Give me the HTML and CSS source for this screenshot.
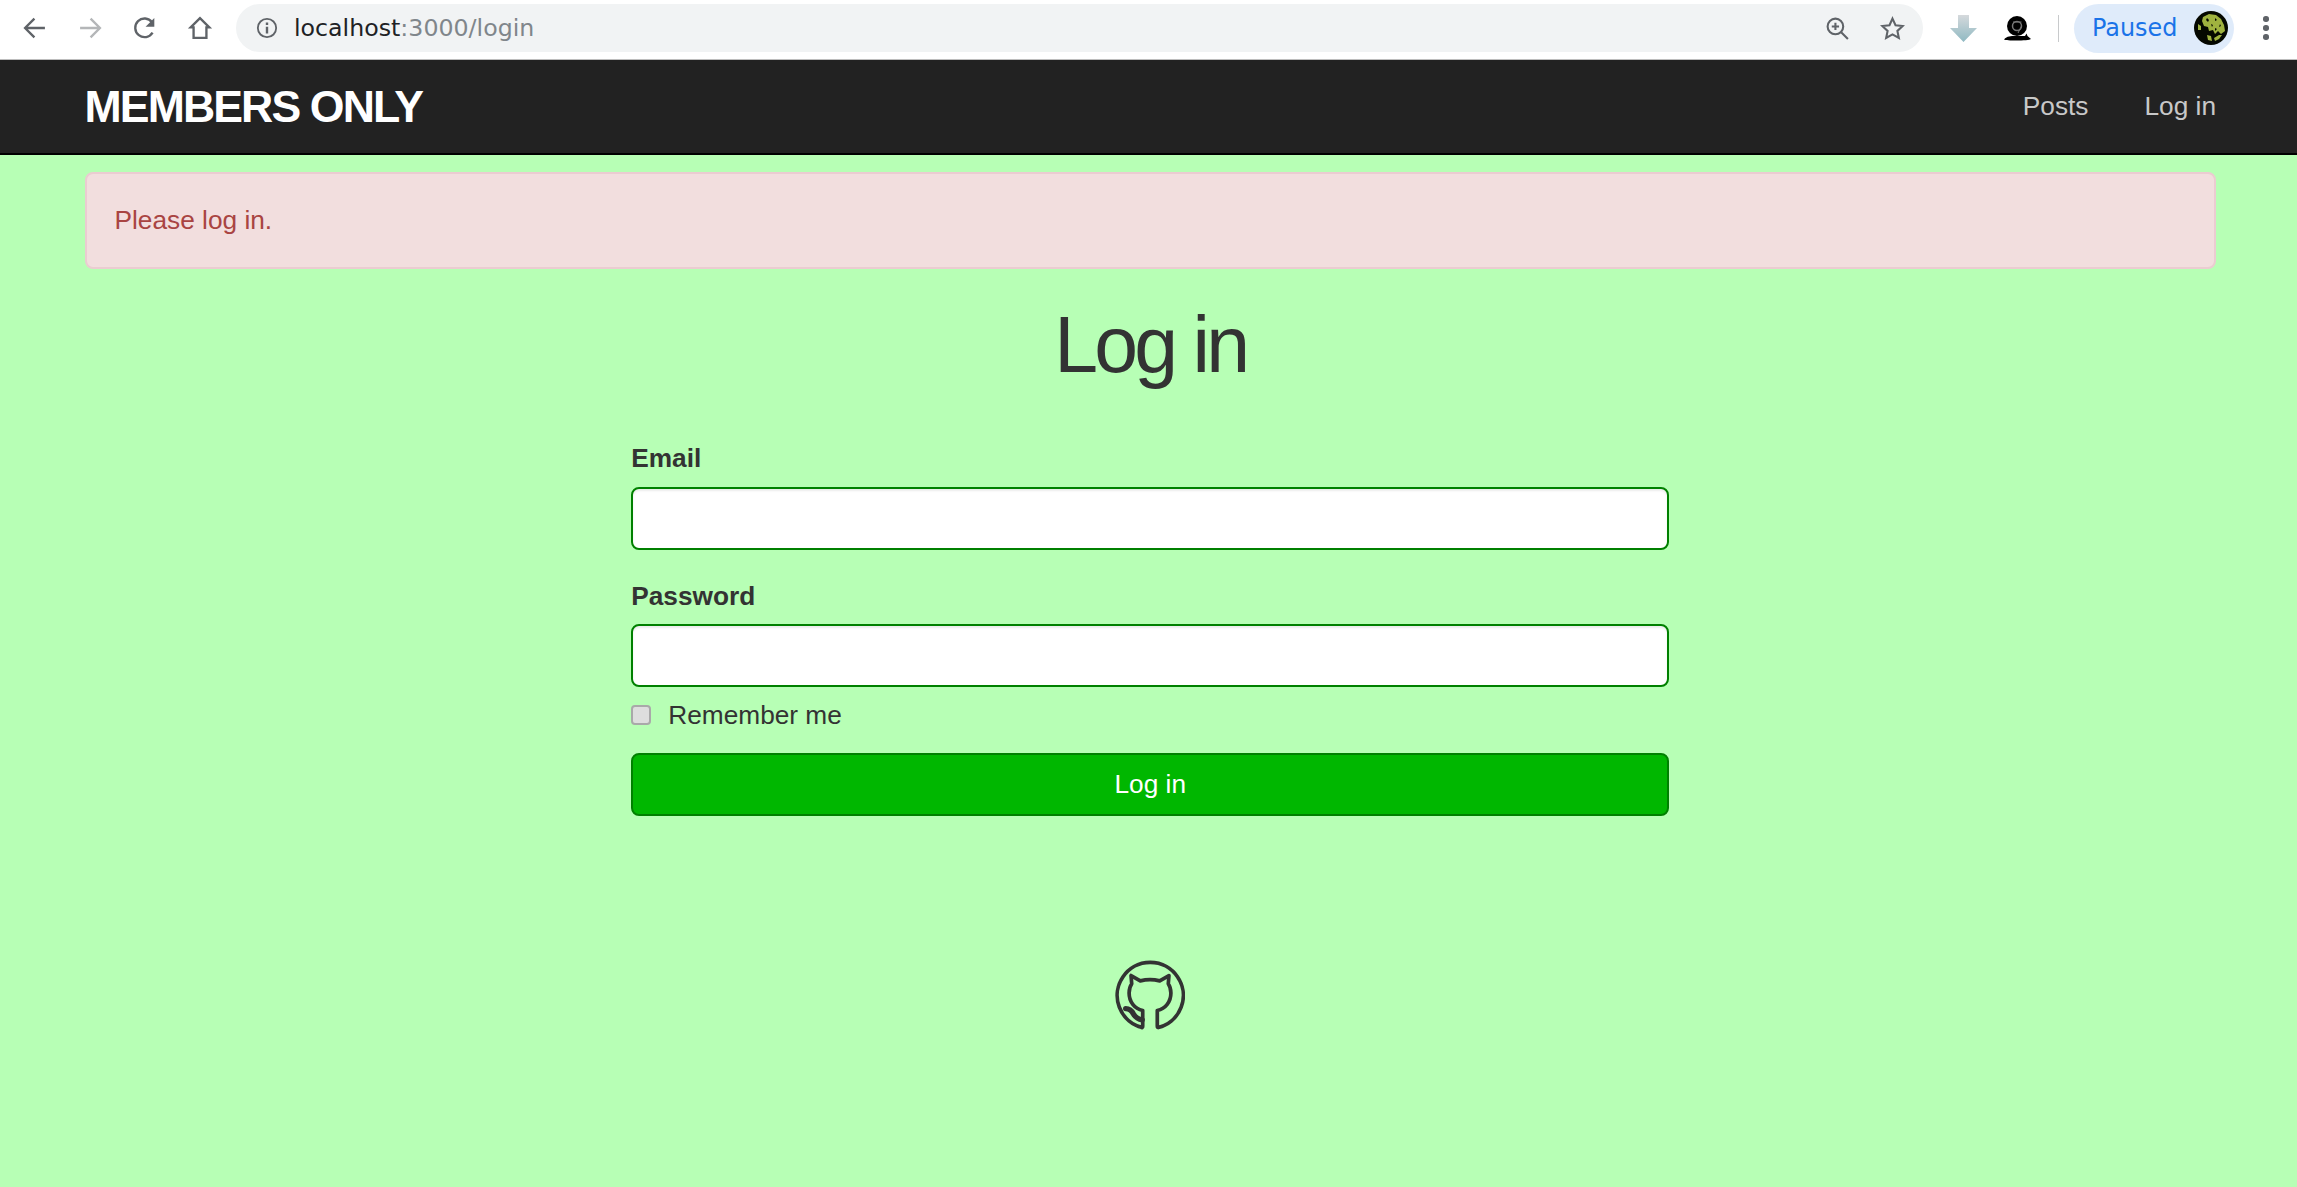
FILE: index.html
```html
<!DOCTYPE html>
<html lang="en">
<head>
<meta charset="utf-8">
<title>Members Only</title>
<link rel="stylesheet" href="styles.css">
</head>
<body>
<div class="toolbar">
  <div class="nav-icons">
    <svg class="tb-icon" viewBox="0 0 24 24"><path class="st" d="M20.500 12H4M11.500 4L3.500 12l8 8"/></svg>
    <svg class="tb-icon faded" viewBox="0 0 24 24"><path class="st" d="M3.500 12H20M12.500 4l8 8-8 8"/></svg>
    <svg class="tb-icon" viewBox="0 0 24 24"><path class="st" d="M18.500 16A8 8 0 1 1 18 7"/><path class="fl" d="M20 3.500v7.500h-7.500z"/></svg>
    <svg class="tb-icon" viewBox="0 0 24 24"><path class="st" d="M12 3.500L4 11.500H6.500v9h11v-9H20z"/></svg>
  </div>
  <div class="omnibox">
    <svg class="info-icon" viewBox="0 0 24 24"><circle class="st" cx="12" cy="12" r="10"/><path class="fl" d="M10.700 10.500h2.600V18h-2.600zM10.700 6h2.600v2.600h-2.600z"/></svg>
    <span class="url"><span class="url-host">localhost</span>:3000/login</span>
    <span class="omni-spacer"></span>
    <svg class="omni-icon" viewBox="0 0 24 24"><circle class="st" cx="10" cy="10" r="7.500"/><path class="st" d="M15.500 15.500L22 22M10 6.500v7M6.500 10h7"/></svg>
    <svg class="omni-icon" viewBox="0 0 24 24"><path class="st" d="M12 2.500l2.900 6.300 6.900.8-5.100 4.700 1.400 6.800-6.100-3.400-6.100 3.400 1.400-6.800-5.100-4.700 6.900-.8z"/></svg>
  </div>
  <svg class="ext-arrow" viewBox="0 0 27 27">
    <defs><linearGradient id="arrowfill" x1="0" y1="0" x2="0" y2="1"><stop offset="0" stop-color="#d5d9dc"/><stop offset="1" stop-color="#8fb9c2"/></linearGradient></defs>
    <path fill="url(#arrowfill)" d="M8 0h11v13h8L13.500 27 0 13h8z"/>
  </svg>
  <svg class="ext-snail" viewBox="0 0 27 27">
    <circle cx="13" cy="11" r="10" fill="#000"/>
    <circle cx="13" cy="11" r="4.500" fill="none" stroke="#777" stroke-width="1.500"/>
    <path d="M9 7h8.500M17.500 11l-3.500 7" fill="none" stroke="#777" stroke-width="1"/>
    <path d="M0 24.500c3-3.500 7-3.500 11-3.500h10l1.500-2.500 1 2.500 3.500 3c-2 2-24.500 2-27 .5z" fill="#000"/>
  </svg>
  <span class="tb-divider"></span>
  <div class="paused">
    <span class="paused-text">Paused</span>
    <svg class="avatar" viewBox="0 0 34 34">
      <circle cx="17" cy="17" r="17" fill="#050800"/>
      <path fill="#9fb23f" d="M9 6l6-3 7 1 5 4 3 6 1 6-4 3-3-3-3 3-2-4-4 1-1-4-4-1-2-5zM25 24l3 0-3 4-4 2-1-3zM4 13l3 2 0 4-3 0zM13 24l4 1 1 5-4-1z"/>
      <path fill="#050800" d="M13 7l2 2-1 2-2-2zM21 7l2 2-2 1zM26 13l1 2-2 1zM17 13l2 1-1 2zM21 17l2 1-2 2z"/>
    </svg>
  </div>
  <div class="dots"><i></i><i></i><i></i></div>
</div>

<nav class="navbar">
  <a class="logo">Members Only</a>
  <div class="nav-links">
    <a class="nav-link">Posts</a>
    <a class="nav-link">Log in</a>
  </div>
</nav>

<main class="content">
  <div class="alert">Please log in.</div>
  <h1 class="title">Log in</h1>
  <form class="login-form">
    <label class="field-label" for="email">Email</label>
    <input class="field-input" id="email" type="email">
    <label class="field-label second" for="password">Password</label>
    <input class="field-input" id="password" type="password">
    <label class="remember"><input class="check" type="checkbox"><span>Remember me</span></label>
    <button class="submit" type="button">Log in</button>
  </form>
  <footer class="footer">
    <svg class="github" viewBox="0 0 72 72">
      <path class="gh" d="M28 69.500A34 34 0 1 1 44.500 69.500Q43.500 69.500 43.500 68V52C52 50 57.500 43 57.500 34C57.500 30 56.500 27 54.800 24.500L55.500 16L46 21.500Q36 19 26 21.500L16.500 16L17.200 24.500C15.500 27 14.500 30 14.500 34C14.500 43 20 50 28.500 52V68Q28.500 69.500 27.500 69.500"/>
      <path class="gh-tail" d="M11 50C15 50 17.500 52.500 19 55.500C21 59 24.500 61 28 61.500"/>
    </svg>
  </footer>
</main>
</body>
</html>
```
FILE: styles.css
```css
* { box-sizing: border-box; }
html, body { margin: 0; padding: 0; }
body {
  height: 1187px;
  overflow: hidden;
  background: #b7ffb5;
  color: #333;
  font-family: "Liberation Sans", Arial, sans-serif;
  font-size: 26.25px;
}
.st { fill: none; stroke: currentColor; stroke-width: 2; }
.fl { fill: currentColor; }

.toolbar {
  display: flex;
  align-items: center;
  height: 60px;
  padding: 0 0 3px 0;
  background: #fff;
  border-bottom: 1px solid #bdbdbd;
  color: #5f6368;
}
.nav-icons {
  display: flex;
  gap: 27px;
  width: 236px;
  padding-left: 21px;
}
.tb-icon { width: 28px; height: 28px; flex: none; }
.faded { color: #b4b6b8; }
.omnibox {
  display: flex;
  align-items: center;
  width: 1687px;
  height: 48px;
  padding: 0 18px 0 20px;
  background: #f1f3f4;
  border-radius: 24px;
}
.info-icon { width: 22px; height: 22px; flex: none; margin-right: 16px; }
.url {
  font-family: "DejaVu Sans", sans-serif;
  font-size: 23.700px;
  color: #80868b;
  white-space: nowrap;
}
.url-host { color: #202124; }
.omni-spacer { flex: 1; }
.omni-icon { width: 25px; height: 25px; flex: none; margin-left: 30px; }
.ext-arrow { width: 27px; height: 27px; flex: none; margin-left: 27px; }
.ext-snail { width: 27px; height: 27px; flex: none; margin-left: 27px; }
.tb-divider { width: 1px; height: 27px; flex: none; margin-left: 27px; background: #c8cacc; }
.paused {
  display: flex;
  align-items: center;
  width: 160px;
  height: 49px;
  margin-left: 15px;
  padding: 0 6px 0 18px;
  background: #dfebfa;
  border-radius: 25px;
  justify-content: space-between;
}
.paused-text {
  font-family: "DejaVu Sans", sans-serif;
  font-size: 23.900px;
  color: #1a73e8;
}
.avatar { width: 34px; height: 34px; flex: none; }
.dots {
  display: flex;
  flex-direction: column;
  gap: 3.500px;
  margin-left: 29px;
}
.dots i { display: block; width: 5.500px; height: 5.500px; border-radius: 50%; background: #5f6368; }

.navbar {
  display: flex;
  align-items: center;
  justify-content: space-between;
  height: 95px;
  padding: 0 81px 0 84.500px;
  background: #222;
  border-bottom: 2px solid #000;
}
.logo {
  color: #fff;
  font-size: 44.600px;
  font-weight: 700;
  letter-spacing: -1.875px;
  text-transform: uppercase;
}
.nav-links { display: flex; gap: 56px; }
.nav-link { color: #c8c8c8; }

.content {
  display: flex;
  flex-direction: column;
  align-items: center;
  padding: 17px 81px 0 84.500px;
}
.alert {
  align-self: stretch;
  height: 97px;
  padding: 28px;
  line-height: 36px;
  background: #f2dede;
  border: 2px solid #ebccd1;
  border-radius: 8px;
  color: #a94442;
}
.title {
  margin: 24px 0 0;
  height: 104px;
  font-size: 78.750px;
  line-height: 104px;
  font-weight: 400;
  letter-spacing: -3.750px;
}
.login-form {
  display: flex;
  flex-direction: column;
  width: 1038px;
  margin-top: 43px;
}
.field-label { font-weight: 700; line-height: 36px; height: 36px; margin-bottom: 10.500px; }
.second { margin-top: 28px; }
.field-input {
  width: 100%;
  height: 63px;
  background: #fff;
  border: 2px solid #008000;
  border-radius: 8px;
  box-shadow: inset 0 2px 2px rgba(0,0,0,.075);
  outline: none;
}
.remember { display: flex; align-items: center; height: 36px; margin-top: 10px; gap: 17px; }
.check {
  appearance: none;
  -webkit-appearance: none;
  width: 20px;
  height: 20px;
  margin: 0;
  background: #dedede;
  border: 2px solid #a9a9a9;
  border-radius: 4px;
  flex: none;
}
.submit {
  width: 100%;
  height: 63px;
  margin-top: 20px;
  padding: 0;
  background: #00b700;
  border: 2px solid #008000;
  border-radius: 8px;
  color: #fff;
  font-family: inherit;
  font-size: inherit;
}
.footer { margin-top: 144px; }
.github { display: block; width: 70px; height: 70px; }
.gh { fill: none; stroke: #333; stroke-width: 3.800; stroke-linejoin: round; stroke-linecap: round; }
.gh-tail { fill: none; stroke: #333; stroke-width: 5.500; stroke-linecap: round; }
```
